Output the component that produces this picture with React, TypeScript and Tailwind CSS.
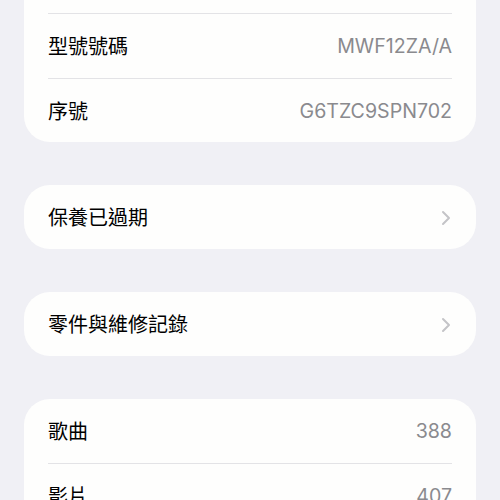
import React from "react";

const font = { fontFamily: 'Inter, "Noto Sans CJK TC", "Noto Sans", sans-serif' };

function Sep() {
  return <div className="mx-6 h-px bg-[#e3e3e6]" />;
}

function Row({ label, value, chevron, h = "h-[64px]" }: { label?: string; value?: string; chevron?: boolean; h?: string }) {
  return (
    <div className={`flex items-center justify-between px-6 pt-[2px] ${h}`}>
      <span className="text-[20px] text-black">{label}</span>
      {value && <span className="text-[19.6px] text-[#8a8a8e]">{value}</span>}
      {chevron && (
        <svg width="10" height="16" viewBox="0 0 10 16" className="mr-[1px]">
          <path d="M2 2l6 6-6 6" fill="none" stroke="#c4c4c7" strokeWidth="2" strokeLinecap="round" strokeLinejoin="round" />
        </svg>
      )}
    </div>
  );
}

export default function App() {
  return (
    <div className="w-[500px] h-[500px] overflow-hidden bg-[#f0f0f5] px-6" style={font}>
      <div className="-mt-[51px] flex flex-col gap-[43px]">
        <div className="rounded-[26px] bg-[#fefefd]">
          <Row />
          <Sep />
          <Row label="型號號碼" value="MWF12ZA/A" />
          <Sep />
          <Row label="序號" value="G6TZC9SPN702" h="h-[63px]" />
        </div>
        <div className="rounded-[26px] bg-[#fefefd]">
          <Row label="保養已過期" chevron />
        </div>
        <div className="rounded-[26px] bg-[#fefefd]">
          <Row label="零件與維修記錄" chevron />
        </div>
        <div className="rounded-[26px] bg-[#fefefd]">
          <Row label="歌曲" value="388" />
          <Sep />
          <Row label="影片" value="407" />
        </div>
      </div>
    </div>
  );
}
